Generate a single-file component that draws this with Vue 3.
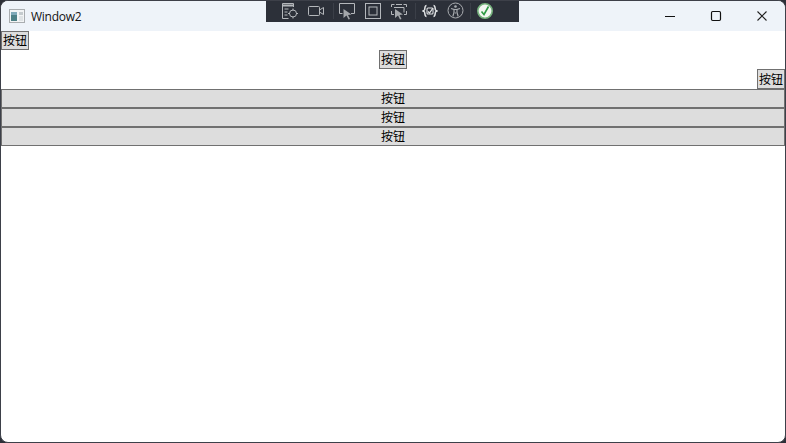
<script setup>
const stretched = [1, 2, 3]
</script>

<template>
  <div class="window">
    <header class="titlebar">
      <svg class="app-icon" width="16" height="16" viewBox="0 0 16 16">
        <rect x="0.5" y="1.5" width="15" height="13" fill="#f2f4f5" stroke="#a9adb0" />
        <rect x="2" y="4" width="6" height="9" fill="#4d8086" />
        <rect x="2" y="4" width="6" height="3" fill="#7fa9b8" />
        <rect x="10" y="4" width="4" height="3" fill="#c5cbce" />
        <rect x="10" y="8" width="4" height="5" fill="#dfe3e5" />
      </svg>
      <span class="title">Window2</span>
      <div class="caption">
        <button class="cap" aria-label="最小化">
          <svg width="12" height="12" viewBox="0 0 12 12"><path d="M1 6.5h10" stroke="#111" stroke-width="1.2" fill="none" /></svg>
        </button>
        <button class="cap" aria-label="最大化">
          <svg width="12" height="12" viewBox="0 0 12 12"><rect x="1.500" y="1.500" width="9" height="9" rx="1.200" stroke="#111" stroke-width="1.200" fill="none" /></svg>
        </button>
        <button class="cap" aria-label="关闭">
          <svg width="12" height="12" viewBox="0 0 12 12"><path d="M1.500 1.500l9 9M10.500 1.500l-9 9" stroke="#222" stroke-width="1.100" fill="none" /></svg>
        </button>
      </div>
    </header>

    <nav class="devbar">
      <svg class="ti" width="18" height="18" viewBox="0 0 18 18" fill="none" stroke="#b4b7bb">
        <path d="M12.500 5V1.500h-11v15h6" />
        <path d="M1.500 3.500h11" stroke-width="2" />
        <path d="M3.500 7h4M3.500 10h3M3.500 13h3" />
        <circle cx="12" cy="11.500" r="3.500" />
        <path d="M12 6.500v2M12 14.500v2M7 11.500h2M15 11.500h2" />
      </svg>
      <svg class="ti b" width="18" height="18" viewBox="0 0 18 18" fill="none" stroke="#b4b7bb">
        <rect x="1.500" y="4.500" width="11" height="9" rx="1" />
        <path d="M12.500 8l4-2.500v7l-4-2.500" />
      </svg>
      <span class="sep s1"></span>
      <svg class="ti c" width="18" height="18" viewBox="0 0 18 18" fill="none" stroke="#b4b7bb">
        <path d="M4.500 11.500H1.500V1.500h15v10H13" />
        <path d="M5.500 7l8 5.500-3.500.5 2 4-1.500.5-2-4-3 2.500z" fill="#a4a7ab" stroke="none" />
      </svg>
      <svg class="ti d" width="18" height="18" viewBox="0 0 18 18" fill="none" stroke="#b4b7bb">
        <rect x="1.500" y="1.500" width="15" height="15" />
        <rect x="5" y="5" width="8" height="8" />
      </svg>
      <svg class="ti e" width="18" height="18" viewBox="0 0 18 18" fill="none" stroke="#b4b7bb">
        <path d="M4.500 2.500H1.500V5M13.500 2.500H16.500V5M1.500 9V12.500H4M16.500 9V12.500H14" />
        <path d="M6 2.500h6M4 5.500h10v5" />
        <path d="M5 7l8 5.500-3.500.5 2 4-1.500.5-2-4-3 2.500z" fill="#a4a7ab" stroke="none" />
      </svg>
      <span class="sep s2"></span>
      <svg class="ti f" width="18" height="18" viewBox="0 0 18 18" fill="none" stroke="#dfe1e3">
        <path d="M5.500 3.500C3.500 3.500 4 7 3.500 8c-.3.600-2 1-2 1s1.700.4 2 1c.5 1 0 4.500 2 4.500M12.500 3.500c2 0 1.500 3.500 2 4.500.3.600 2 1 2 1s-1.700.4-2 1c-.5 1 0 4.500-2 4.500" stroke-width="1.500" />
        <rect x="6" y="6" width="6" height="6" rx="1" stroke-width="1.100" />
        <path d="M7 9.500l1.500 1.500 3.500-5" stroke-width="1.300" />
      </svg>
      <svg class="ti g" width="18" height="18" viewBox="0 0 18 18" fill="none" stroke="#a9acb0">
        <circle cx="8.500" cy="8.500" r="7.500" />
        <circle cx="8.500" cy="4.500" r="1.300" fill="#a9acb0" stroke="none" />
        <path d="M4 6.500l3 1v3L5.800 14.500M13 6.500l-3 1v3L11.200 14.500M7 7.500h3M8.500 10.500v1" stroke-width="1.200" />
      </svg>
      <span class="sep s3"></span>
      <svg class="ti h" width="18" height="18" viewBox="0 0 18 18" fill="none">
        <circle cx="9" cy="9" r="7.200" fill="#f3f6f2" stroke="#76b27d" stroke-width="1.600" />
        <path d="M5.500 9.500l2.500 3L12.500 4.500" stroke="#2f9a45" stroke-width="1.600" />
      </svg>
    </nav>

    <main class="content">
      <button class="wbtn left">按钮</button>
      <button class="wbtn center">按钮</button>
      <button class="wbtn right">按钮</button>
      <button v-for="n in stretched" :key="n" class="wbtn full">按钮</button>
    </main>
  </div>
</template>

<style>
html, body { margin: 0; background: #2d3038; }
</style>

<style scoped>
.window {
  position: relative;
  width: 786px;
  height: 443px;
  box-sizing: border-box;
  border: 1px solid #3d4049;
  border-radius: 8px;
  background: #fff;
  overflow: hidden;
  display: flex;
  flex-direction: column;
}
.titlebar {
  flex: none;
  height: 30px;
  background: #eef3f9;
  display: flex;
  align-items: center;
  padding-left: 8px;
}
.app-icon { flex: none; }
.title {
  margin-left: 6px;
  font: 12px "Open Sans", "Noto Sans", sans-serif;
  letter-spacing: -0.25px;
  color: #111;
}
.caption { margin-left: auto; display: flex; height: 100%; }
.cap {
  width: 46px;
  height: 30px;
  border: 0;
  padding: 0;
  background: transparent;
  display: flex;
  align-items: center;
  justify-content: center;
}
.devbar {
  position: absolute;
  top: -1px;
  left: 265px;
  width: 253px;
  height: 22px;
  background: #2c3039;
  display: flex;
  align-items: center;
  box-sizing: border-box;
  padding-left: 15px;
}
.ti { flex: none; }
.b { margin-left: 8px; }
.sep { flex: none; width: 1px; height: 16px; background: #3b3f48; }
.s1 { margin-left: 8px; }
.c { margin-left: 4px; }
.d { margin-left: 8px; }
.e { margin-left: 8px; }
.s2 { margin-left: 7px; }
.f { margin-left: 5px; }
.g { margin-left: 8px; }
.s3 { margin-left: 5px; }
.h { margin-left: 5px; }
.content {
  flex: 1;
  display: flex;
  flex-direction: column;
  font: 12px/15px "Noto Sans CJK SC", sans-serif;
}
.wbtn {
  box-sizing: border-box;
  height: 19px;
  min-width: 28px;
  padding: 0 1px 2px;
  border: 1px solid #707070;
  background: #dddddd;
  color: #000;
  font: inherit;
  line-height: 15px;
  white-space: nowrap;
}
.left { align-self: flex-start; }
.center { align-self: center; }
.right { align-self: flex-end; height: 20px; padding-bottom: 1px; }
.full { align-self: stretch; }
</style>
